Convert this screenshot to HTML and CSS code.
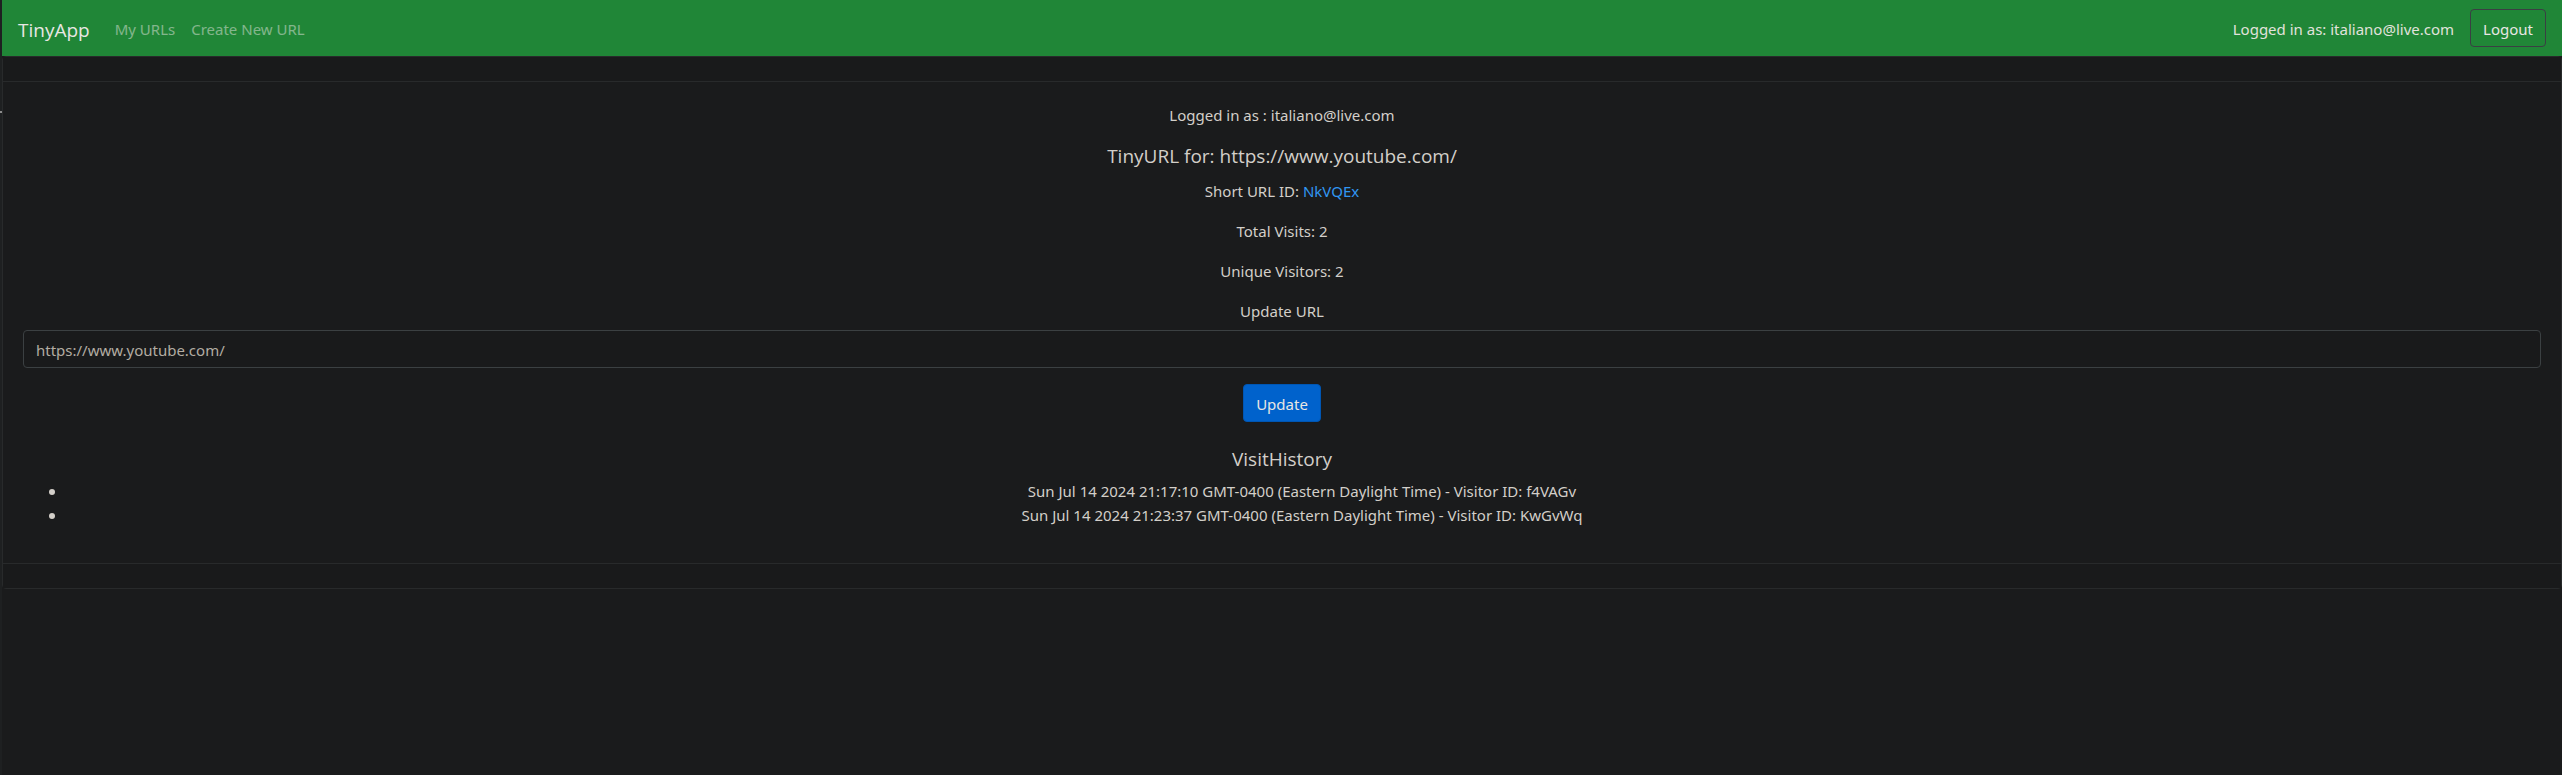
FILE: index.html
```html
<!DOCTYPE html>
<html lang="en">
<head>
  <meta charset="utf-8">
  <meta name="viewport" content="width=device-width, initial-scale=1">
  <title>TinyApp</title>
  <link rel="stylesheet" href="styles.css">
</head>
<body>
  <div class="edge"><span class="edge-mark"></span></div>
  <div class="page">
    <header class="navbar">
      <a class="brand" href="#">TinyApp</a>
      <nav class="nav-links">
        <a class="nav-link" href="#">My URLs</a>
        <a class="nav-link" href="#">Create New URL</a>
      </nav>
      <form class="session">
        <span>Logged in as: italiano@live.com</span>
        <button class="btn btn-outline" type="submit">Logout</button>
      </form>
    </header>
    <main class="card">
      <div class="card-header"></div>
      <div class="card-body">
        <p class="text">Logged in as : italiano@live.com</p>
        <h5 class="title">TinyURL for: https://www.youtube.com/</h5>
        <p class="text">Short URL ID: <a class="link" href="#">NkVQEx</a></p>
        <p class="text">Total Visits: 2</p>
        <p class="text">Unique Visitors: 2</p>
        <form>
          <label class="label" for="long-url">Update URL</label>
          <input class="field" id="long-url" type="text" placeholder="https://www.youtube.com/">
          <button class="btn btn-primary" type="submit">Update</button>
        </form>
        <h5 class="history-title">VisitHistory</h5>
        <ul class="history">
          <li>Sun Jul 14 2024 21:17:10 GMT-0400 (Eastern Daylight Time) - Visitor ID: f4VAGv</li>
          <li>Sun Jul 14 2024 21:23:37 GMT-0400 (Eastern Daylight Time) - Visitor ID: KwGvWq</li>
        </ul>
      </div>
      <div class="card-footer"></div>
    </main>
  </div>
</body>
</html>
```
FILE: styles.css
```css
*, *::before, *::after { box-sizing: border-box; }

body {
  display: flex;
  min-height: 100vh;
  margin: 0;
  background: #1a1b1c;
  color: #d3cfc9;
  font-family: "Segoe UI", "Noto Sans", "Open Sans", sans-serif;
  font-size: 15px;
  line-height: 24px;
}

a { text-decoration: none; }

.edge {
  flex: none;
  width: 2px;
  padding-top: 111px;
  background: #1e2021;
}
.edge-mark { display: block; height: 2px; background: #8c8c8c; }

.page { flex: 1; min-width: 0; }

.navbar {
  display: flex;
  align-items: center;
  height: 56px;
  padding: 0 16px;
  background: #208637;
  color: #e0e2dc;
}
.brand,
.title,
.history-title {
  font-family: "Segoe UI", "Open Sans", "Noto Sans", sans-serif;
  font-size: 19px;
  font-weight: 400;
}
.brand { margin-right: 17px; padding-top: 4px; color: #e8e6e3; line-height: 28px; }
.nav-links { display: flex; padding-top: 2px; }
.nav-link { padding: 0 8px; color: rgba(232, 230, 227, 0.5); }
.session { display: flex; align-items: center; gap: 16px; margin-left: auto; }
.session span { padding-top: 2px; }

.btn {
  height: 38px;
  padding: 1px 12px 0;
  border: 1px solid;
  border-radius: 4px;
  color: #e8e6e3;
  font: inherit;
  cursor: pointer;
}
.btn-outline { border-color: #3a3f43; background: transparent; }
.btn-primary { border-color: #0056b3; background: #0062cc; }

.card {
  border: 1px solid #282a2b;
  border-radius: 4px;
  text-align: center;
}
.card-header, .card-footer { height: 25px; background: #191a1b; }
.card-header { border-bottom: 1px solid #282a2b; }
.card-footer { border-top: 1px solid #282a2b; }
.card-body { padding: 21px 20px 20px; }

.text { margin: 0 0 16px; }
.title { margin: 0 0 11px; padding-top: 1px; line-height: 24px; }
.history-title { margin: 25px 0 8px; line-height: 24px; }
.link { color: #3197f3; }

.label { display: block; margin-bottom: 7px; }
.field {
  display: block;
  width: 100%;
  height: 38px;
  margin-bottom: 16px;
  padding: 1px 12px 0;
  border: 1px solid #3b4042;
  border-radius: 4px;
  background: #191a1b;
  color: #b2aca2;
  font: inherit;
}
.field::placeholder { color: #b2aca2; opacity: 1; }

.history { margin: 0 0 16px; padding-left: 26px; list-style: none; }
.history li {
  display: grid;
  grid-template-columns: 14px 1fr;
  align-items: center;
}
.history li::before {
  content: "";
  width: 6px;
  height: 6px;
  margin-top: 2px;
  border-radius: 50%;
  background: currentColor;
}
```
